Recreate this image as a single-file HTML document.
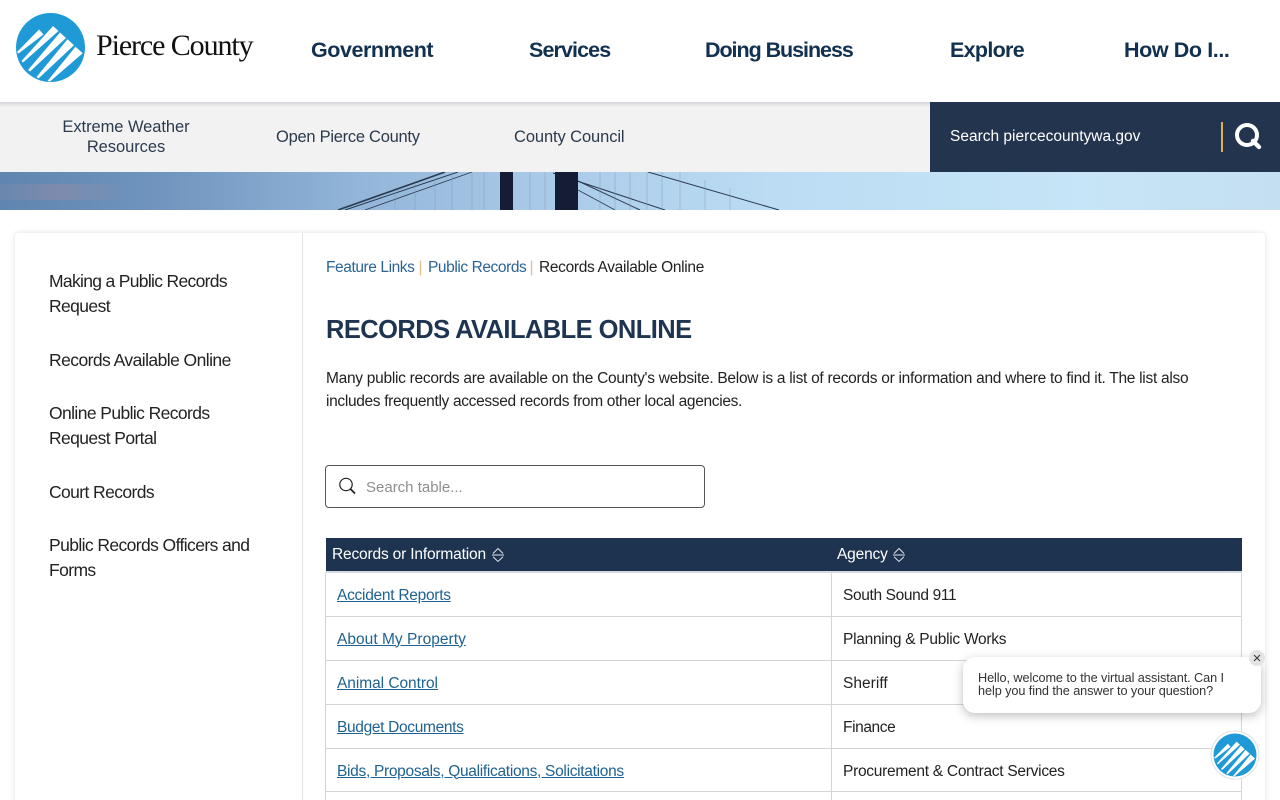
<!DOCTYPE html>
<html lang="en"><head><meta charset="utf-8"><title>Records Available Online</title>
<style>
html,body{margin:0;padding:0;width:1280px;height:800px;overflow:hidden;background:#fff;font-family:"Liberation Sans",sans-serif;}
#w{position:relative;width:1280px;height:800px;overflow:hidden;}
.t{position:absolute;white-space:nowrap;line-height:20px;}
a{color:inherit;}
.nav{top:38px;font-weight:700;font-size:21.5px;line-height:24px;color:#12304f;}
.sub{font-size:16.5px;color:#2c3a4d;}
.side{font-size:17.5px;color:#222;letter-spacing:-.6px;left:49px;}
.bc{top:258px;font-size:15.5px;letter-spacing:-.42px;color:#2b6493;}
.body{font-size:15.5px;color:#222;letter-spacing:-.28px;left:326px;}
.cell{font-size:15.5px;color:#222;letter-spacing:-.27px;}
.lnk{font-size:15.5px;color:#1f6291;letter-spacing:-.27px;left:337px;text-decoration:underline;}
.hl{position:absolute;background:#d5d5d8;height:1px;left:325px;width:917px;}
.vl{position:absolute;background:#d5d5d8;width:1px;top:572px;height:228px;}
.th{top:545px;font-size:15.5px;color:#fff;letter-spacing:-.17px;}
</style></head><body><div id="w">

<svg style="position:absolute;left:0;top:0" width="90" height="95" viewBox="0 0 90 95">
<circle cx="50.5" cy="47.5" r="34.5" fill="#1f9ad6"/>
<g fill="#fff">
<polygon points="17,52 39,29.5 43.5,34.5 18.5,53.5"/>
<polygon points="21.5,61 53,26 58.5,31 23,62.5"/>
<polygon points="28,70 60,32.5 66,38 30,71.5"/>
<polygon points="36.5,77 67.5,39.3 74,45.3 38.5,78.5"/>
<polygon points="47.5,81 75.5,46.7 82.7,53.3 50,81.5"/>
</g></svg>
<div class="t" style="left:96px;top:28px;font-family:'Liberation Serif',serif;font-size:30px;line-height:36px;color:#111;letter-spacing:-1.1px">Pierce County</div>

<div class="t nav" style="left:311px;letter-spacing:-.45px">Government</div>
<div class="t nav" style="left:529px;letter-spacing:-.9px">Services</div>
<div class="t nav" style="left:705px;letter-spacing:-1.05px">Doing Business</div>
<div class="t nav" style="left:950px;letter-spacing:-.7px">Explore</div>
<div class="t nav" style="left:1124px;letter-spacing:-.4px">How Do I...</div>

<div style="position:absolute;left:0;top:172px;width:1280px;height:38px;overflow:hidden;background:linear-gradient(90deg,#5f86b0 0,#6f94bd 12%,#92b5d9 28%,#a9c9e8 42%,#bbdcf3 60%,#c6e5f7 85%,#c4dff0 100%)">
<svg width="1280" height="39" viewBox="0 0 1280 39" style="position:absolute;left:0;top:0">
<defs><linearGradient id="p" x1="0" x2="1"><stop offset="0" stop-color="#c08a98" stop-opacity=".1"/><stop offset=".5" stop-color="#b48a9c" stop-opacity=".3"/><stop offset="1" stop-color="#c08a98" stop-opacity="0"/></linearGradient></defs>
<rect x="0" y="12" width="125" height="16" fill="url(#p)"/>
<g stroke="#2a3a50" fill="none">
<path d="M338 38 L445 0" stroke-width="1.6"/><path d="M345 38 L458 0" stroke-width="1"/><path d="M365 38 L472 0" stroke-width=".8"/>
<path d="M553 1 L665 38" stroke-width="1"/><path d="M578 9 L640 38" stroke-width="1"/><path d="M578 18 L615 38" stroke-width=".8"/>
<path d="M648 0 L779 38" stroke-width="1"/>
</g>
<g stroke="#7c94ad" stroke-width="1" opacity=".4">
<path d="M395 20V38M415 12V38M435 6V38M452 0V38M472 0V38M484 0V38M530 0V38M545 0V38M600 0V38M615 0V38M630 0V38M647 0V38M662 0V38M680 0V38M705 8V38M730 16V38"/>
</g>
<rect x="500" y="0" width="13" height="39" fill="#141d33"/>
<rect x="555" y="0" width="23" height="39" fill="#141d33"/>
</svg></div>

<div style="position:absolute;left:0;top:102px;width:930px;height:70px;background:#f2f2f2"></div>
<div style="position:absolute;left:0;top:102px;width:930px;height:5px;background:linear-gradient(#d2d5d9,#f2f2f2);"></div>
<div style="position:absolute;left:930px;top:102px;width:350px;height:70px;background:#23344f"></div>

<div class="t sub" style="left:0;width:252px;text-align:center;top:117px;letter-spacing:-.06px">Extreme Weather</div>
<div class="t sub" style="left:0;width:252px;text-align:center;top:137px;letter-spacing:-.06px">Resources</div>
<div class="t sub" style="left:276px;top:127px;letter-spacing:-.27px">Open Pierce County</div>
<div class="t sub" style="left:514px;top:127px;letter-spacing:-.1px">County Council</div>
<div class="t" style="left:950px;top:127px;font-size:15.5px;color:#fff">Search piercecountywa.gov</div>
<div style="position:absolute;left:1221px;top:122px;width:2px;height:30px;background:#e0b050"></div>
<svg style="position:absolute;left:1232px;top:120px" width="32" height="32" viewBox="0 0 32 32"><circle cx="15" cy="15" r="10" fill="none" stroke="#fff" stroke-width="4"/><path d="M21 21 L27 27" stroke="#fff" stroke-width="4.4" stroke-linecap="round"/></svg>

<div style="position:absolute;left:15px;top:233px;width:1250px;height:600px;background:#fff;box-shadow:0 0 6px rgba(0,0,0,.13);border-radius:3px"></div>
<div style="position:absolute;left:302px;top:233px;width:1px;height:567px;background:#e2e2e2"></div>

<div class="t side" style="top:271px;letter-spacing:-.68px">Making a Public Records</div>
<div class="t side" style="top:296px">Request</div>
<div class="t side" style="top:350px;letter-spacing:-.56px">Records Available Online</div>
<div class="t side" style="top:403px">Online Public Records</div>
<div class="t side" style="top:428px">Request Portal</div>
<div class="t side" style="top:482px">Court Records</div>
<div class="t side" style="top:535px">Public Records Officers and</div>
<div class="t side" style="top:560px">Forms</div>

<div class="t bc" style="left:326px">Feature Links</div>
<div class="t bc" style="left:418.5px;color:#e3c08a">|</div>
<div class="t bc" style="left:428px">Public Records</div>
<div class="t bc" style="left:529.5px;color:#e3c08a">|</div>
<div class="t bc" style="left:539px;color:#222;letter-spacing:-.33px">Records Available Online</div>

<div class="t" style="left:326px;top:315px;line-height:30px;font-size:25.5px;font-weight:700;color:#1e3450;letter-spacing:-.57px">RECORDS AVAILABLE ONLINE</div>
<div class="t body" style="top:369px">Many public records are available on the County's website. Below is a list of records or information and where to find it. The list also</div>
<div class="t body" style="top:392px;letter-spacing:-.33px">includes frequently accessed records from other local agencies.</div>

<div style="position:absolute;left:325px;top:465px;width:378px;height:41px;border:1px solid #555;border-radius:4px;background:#fff"></div>
<svg style="position:absolute;left:337px;top:476px" width="20" height="20" viewBox="0 0 20 20"><circle cx="9" cy="8.5" r="6.2" fill="none" stroke="#222" stroke-width="1.2"/><path d="M13.5 13 L18 17.5" stroke="#222" stroke-width="1.8"/></svg>
<div class="t" style="left:366px;top:478px;font-size:15px;color:#8e8e8e">Search table...</div>

<div style="position:absolute;left:326px;top:538px;width:916px;height:33px;background:#1d3350"></div>
<div style="position:absolute;left:326px;top:571px;width:916px;height:2px;background:#d3dae2"></div>
<div class="t th" style="left:332px">Records or Information</div>
<svg style="position:absolute;left:491px;top:547px" width="14" height="16" viewBox="0 0 14 16"><path d="M2 6.5 L7 1.5 L12 6.5 M1 8 H13 M2 9.8 L7 14.5 L12 9.8" fill="none" stroke="#dfe4ea" stroke-width="1"/></svg>
<div class="t th" style="left:837px">Agency</div>
<svg style="position:absolute;left:892px;top:547px" width="14" height="16" viewBox="0 0 14 16"><path d="M2 6.5 L7 1.5 L12 6.5 M1 8 H13 M2 9.8 L7 14.5 L12 9.8" fill="none" stroke="#dfe4ea" stroke-width="1"/></svg>

<div class="vl" style="left:325px"></div><div class="vl" style="left:831px"></div><div class="vl" style="left:1241px"></div>
<div class="hl" style="top:616px"></div><div class="hl" style="top:660px"></div><div class="hl" style="top:704px"></div><div class="hl" style="top:748px"></div><div class="hl" style="top:791px"></div>

<div class="t lnk" style="top:585.5px">Accident Reports</div><div class="t cell" style="left:843px;top:585.5px;letter-spacing:-.36px">South Sound 911</div>
<div class="t lnk" style="top:629.5px;letter-spacing:.03px">About My Property</div><div class="t cell" style="left:843px;top:629.5px">Planning &amp; Public Works</div>
<div class="t lnk" style="top:673.5px;letter-spacing:-.05px">Animal Control</div><div class="t cell" style="left:843px;top:673.5px;letter-spacing:.03px">Sheriff</div>
<div class="t lnk" style="top:717.5px;letter-spacing:-.33px">Budget Documents</div><div class="t cell" style="left:843px;top:717.5px;letter-spacing:-.4px">Finance</div>
<div class="t lnk" style="top:761.5px;letter-spacing:-.3px">Bids, Proposals, Qualifications, Solicitations</div><div class="t cell" style="left:843px;top:761.5px">Procurement &amp; Contract Services</div>

<div style="position:absolute;left:963px;top:657px;width:298px;height:56px;background:#fff;border-radius:12px;box-shadow:0 3px 10px rgba(0,0,0,.25)"></div>
<div class="t" style="left:978px;top:672px;font-size:12.7px;line-height:13px;color:#333;letter-spacing:-.08px">Hello, welcome to the virtual assistant. Can I<br>help you find the answer to your question?</div>
<div style="position:absolute;left:1249px;top:650px;width:16px;height:16px;border-radius:50%;background:#e4e4e4"></div>
<svg style="position:absolute;left:1249px;top:650px" width="16" height="16" viewBox="0 0 16 16"><path d="M5 5 L11 11 M11 5 L5 11" stroke="#333" stroke-width="1"/></svg>

<svg style="position:absolute;left:1210px;top:730px" width="50" height="50" viewBox="0 0 50 50">
<circle cx="25" cy="25" r="24" fill="#fff" stroke="#dde3e8" stroke-width="1"/>
<circle cx="25" cy="25" r="21.5" fill="#1f9ad6"/>
<g fill="#fff" transform="translate(25 25) scale(.623) translate(-50.5 -47.5)">
<polygon points="17,52 39,29.5 43.5,34.5 18.5,53.5"/>
<polygon points="21.5,61 53,26 58.5,31 23,62.5"/>
<polygon points="28,70 60,32.5 66,38 30,71.5"/>
<polygon points="36.5,77 67.5,39.3 74,45.3 38.5,78.5"/>
<polygon points="47.5,81 75.5,46.7 82.7,53.3 50,81.5"/>
</g></svg>
</div></body></html>
